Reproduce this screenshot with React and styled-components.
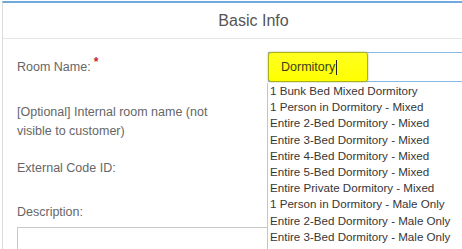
import React from "react";
import styled, { createGlobalStyle } from "styled-components";

const Global = createGlobalStyle`
  html, body { margin: 0; padding: 0; background: #fff; }
  body { width: 462px; height: 249px; overflow: hidden; font-family: "Liberation Sans", Arial, sans-serif; }
`;

const Panel = styled.div`
  margin: 1px 0 0 2px;
  width: 502px;
  height: 300px;
  border-top: 2px solid #6fa8dc;
  border-left: 1px solid #dcdcdc;
  box-sizing: border-box;
`;

const Header = styled.div`
  height: 35px;
  display: flex;
  align-items: center;
  justify-content: center;
  border-bottom: 1px solid #e6e6e6;
  font-size: 16px;
  color: #555;
`;

const Body = styled.div`
  padding: 0 0 0 14px;
`;

const Row = styled.div`
  display: grid;
  grid-template-columns: 251px 1fr;
  align-items: center;
  margin-top: ${(p) => p.$mt}px;
`;

const Label = styled.div`
  font-size: 12.5px;
  line-height: 19px;
  color: #666;
  max-width: 212px;
`;

const Required = styled.span`
  color: #c0282d;
  font-size: 12px;
  font-weight: bold;
  position: relative;
  top: -5px;
  margin-left: 3px;
`;

const InputWrap = styled.div`
  position: relative;
  height: 30px;
`;

const InputBox = styled.div`
  height: 30px;
  box-sizing: border-box;
  border: 1px solid #86b9e3;
  display: flex;
  align-items: stretch;
`;

const Highlight = styled.div`
  width: 100px;
  margin: -1px 0 -1px -1px;
  box-sizing: border-box;
  background: linear-gradient(#ffff20, #ffff00);
  border: 1px solid #a9b318;
  border-radius: 3px;
  box-shadow: 0 0 2px rgba(90, 100, 0, 0.5);
  display: flex;
  align-items: center;
  padding-left: 12px;
  font-size: 12.5px;
  color: #3d3d1a;
`;

const Caret = styled.span`
  display: inline-block;
  width: 1px;
  height: 15px;
  background: #222;
  margin-left: 1px;
`;

const Dropdown = styled.ul`
  position: absolute;
  top: 31px;
  left: -1px;
  width: 260px;
  margin: 0;
  padding: 0 0 0 2px;
  list-style: none;
  background: #fff;
  border-left: 1px solid #c4c4c4;
  z-index: 5;
`;

const Option = styled.li`
  font-size: 11.6px;
  line-height: 16.2px;
  height: 16.2px;
  color: #363636;
  white-space: nowrap;
`;

const Textarea = styled.div`
  margin-top: 5.5px;
  width: 480px;
  height: 60px;
  border: 1px solid #c8c8c8;
  box-sizing: border-box;
`;

const options = [
  "1 Bunk Bed Mixed Dormitory",
  "1 Person in Dormitory - Mixed",
  "Entire 2-Bed Dormitory - Mixed",
  "Entire 3-Bed Dormitory - Mixed",
  "Entire 4-Bed Dormitory - Mixed",
  "Entire 5-Bed Dormitory - Mixed",
  "Entire Private Dormitory - Mixed",
  "1 Person in Dormitory - Male Only",
  "Entire 2-Bed Dormitory - Male Only",
  "Entire 3-Bed Dormitory - Male Only",
  "Entire 4-Bed Dormitory - Male Only",
];

export default function App() {
  return (
    <>
      <Global />
      <Panel>
        <Header>Basic Info</Header>
        <Body>
          <Row $mt={13}>
            <Label>
              Room Name:<Required>*</Required>
            </Label>
            <InputWrap>
              <InputBox>
                <Highlight>
                  Dormitory<Caret />
                </Highlight>
              </InputBox>
              <Dropdown>
                {options.map((o) => (
                  <Option key={o}>{o}</Option>
                ))}
              </Dropdown>
            </InputWrap>
          </Row>
          <Row $mt={20.5}>
            <Label>[Optional] Internal room name (not visible to customer)</Label>
          </Row>
          <Row $mt={18}>
            <Label>External Code ID:</Label>
          </Row>
          <Row $mt={25}>
            <Label>Description:</Label>
          </Row>
          <Textarea />
        </Body>
      </Panel>
    </>
  );
}
